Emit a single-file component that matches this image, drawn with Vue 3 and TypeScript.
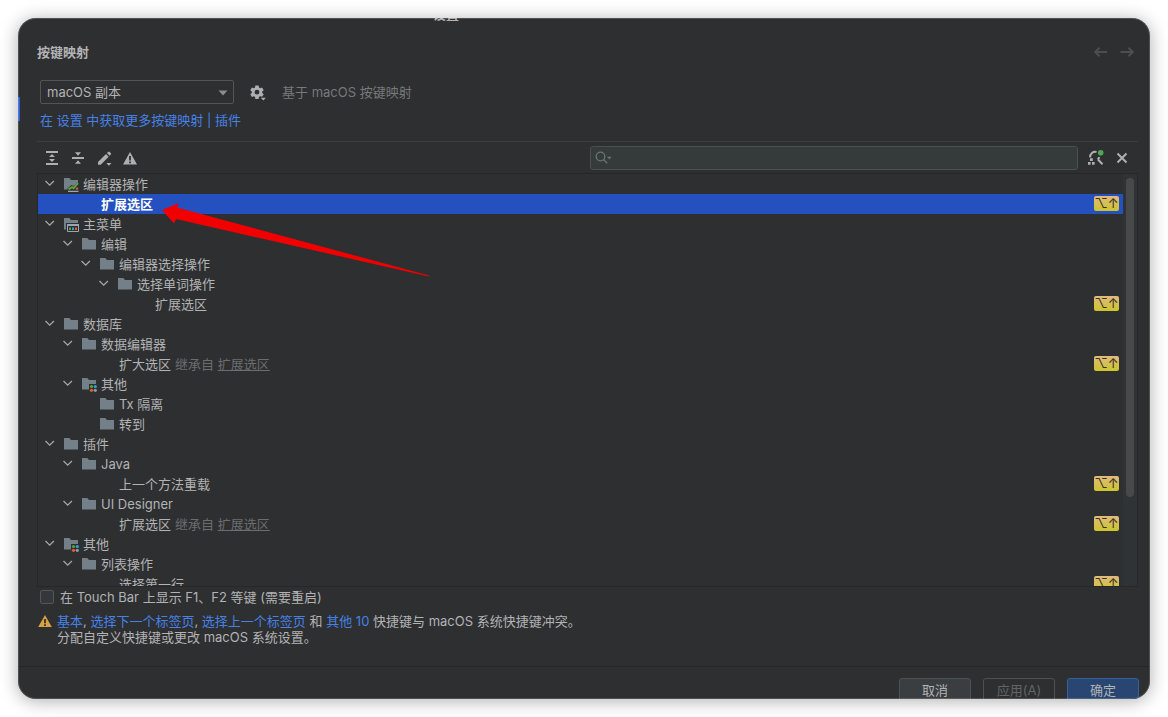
<script setup lang="ts">
import { ref } from 'vue'

type Icon = 'folder' | 'editor' | 'menu' | 'other'

interface Row {
  id: number
  depth: number
  label: string
  icon?: Icon
  open?: boolean
  inherited?: string
  shortcut?: string
}

const KEY = '⌥↑'

const rows: Row[] = [
  { id: 1, depth: 0, label: '编辑器操作', icon: 'editor', open: true },
  { id: 2, depth: 1, label: '扩展选区', shortcut: KEY },
  { id: 3, depth: 0, label: '主菜单', icon: 'menu', open: true },
  { id: 4, depth: 1, label: '编辑', icon: 'folder', open: true },
  { id: 5, depth: 2, label: '编辑器选择操作', icon: 'folder', open: true },
  { id: 6, depth: 3, label: '选择单词操作', icon: 'folder', open: true },
  { id: 7, depth: 4, label: '扩展选区', shortcut: KEY },
  { id: 8, depth: 0, label: '数据库', icon: 'folder', open: true },
  { id: 9, depth: 1, label: '数据编辑器', icon: 'folder', open: true },
  { id: 10, depth: 2, label: '扩大选区', inherited: '扩展选区', shortcut: KEY },
  { id: 11, depth: 1, label: '其他', icon: 'other', open: true },
  { id: 12, depth: 2, label: 'Tx 隔离', icon: 'folder' },
  { id: 13, depth: 2, label: '转到', icon: 'folder' },
  { id: 14, depth: 0, label: '插件', icon: 'folder', open: true },
  { id: 15, depth: 1, label: 'Java', icon: 'folder', open: true },
  { id: 16, depth: 2, label: '上一个方法重载', shortcut: KEY },
  { id: 17, depth: 1, label: 'UI Designer', icon: 'folder', open: true },
  { id: 18, depth: 2, label: '扩展选区', inherited: '扩展选区', shortcut: KEY },
  { id: 19, depth: 0, label: '其他', icon: 'other', open: true },
  { id: 20, depth: 1, label: '列表操作', icon: 'folder', open: true },
  { id: 21, depth: 2, label: '选择第一行', shortcut: KEY },
]

const selected = ref(2)
const keymap = ref('macOS 副本')
const query = ref('')
const touchBar = ref(false)
</script>

<template>
  <div class="page">
    <div class="window">
      <span class="marker"></span>
      <header class="titlebar"><span>设置</span></header>

      <main class="body">
        <div class="heading">
          <h1>按键映射</h1>
          <nav class="history">
            <button type="button" aria-label="后退" disabled>
              <svg width="16" height="16" viewBox="0 0 16 16"><path d="M14 8H2.500M6.500 3.800L2.300 8l4.200 4.200" /></svg>
            </button>
            <button type="button" aria-label="前进" disabled>
              <svg width="16" height="16" viewBox="0 0 16 16"><path d="M1.500 8h12M9.500 3.800L13.700 8l-4.200 4.200" /></svg>
            </button>
          </nav>
        </div>

        <div class="scheme">
          <span class="combo">
            <select v-model="keymap" aria-label="按键映射">
              <option>macOS 副本</option>
            </select>
            <svg class="caret" width="10" height="6" viewBox="0 0 10 6"><path d="M0.500 0.500h9L5 5.500z" /></svg>
          </span>
          <button type="button" class="gear" aria-label="方案操作">
            <svg width="18" height="18" viewBox="0 0 18 18">
              <path fill-rule="evenodd" d="M6.400 2.500h3.200l.4 2 1.200.7 1.900-.7 1.600 2.700-1.500 1.300v1.400l1.500 1.300-1.600 2.700-1.900-.7-1.200.7-.4 2H6.400l-.4-2-1.200-.7-1.900.7-1.600-2.700 1.500-1.300V8.500L1.300 7.200l1.600-2.700 1.900.7L6 4.500zM8 6.800a2.400 2.400 0 1 0 0 4.800 2.400 2.400 0 0 0 0-4.800z" />
              <path class="halo" d="M10.500 13.800H18V18h-5z" />
              <path d="M11.800 14.800h5l-2.500 2.700z" />
            </svg>
          </button>
          <span class="based">基于 macOS 按键映射</span>
        </div>

        <p class="more"><a href="#more">在 设置 中获取更多按键映射</a> <span>|</span> <a href="#plugins">插件</a></p>

        <div class="toolbar">
          <div class="tools">
            <button type="button" aria-label="全部展开">
              <svg width="16" height="16" viewBox="0 0 16 16"><path d="M2 1h12v2H2zM2 13h12v2H2zM8 3.900l3 3H5zM8 12.100l3-3H5z" /></svg>
            </button>
            <button type="button" aria-label="全部折叠">
              <svg width="16" height="16" viewBox="0 0 16 16"><path d="M2 7h12v2H2zM8 5.700l3-3.400H5zM8 10.300l3 3.400H5z" /></svg>
            </button>
            <button type="button" aria-label="编辑快捷键">
              <svg width="16" height="16" viewBox="0 0 16 16"><path d="M2 12L10 4l2.700 2.700-8 8H2zM10.900 3.100l1.200-1.200q.8-.7 1.500 0l1.200 1.200q.7.700 0 1.500l-1.200 1.200zM10.300 13H15.500l-2.600 2.800z" /></svg>
            </button>
            <button type="button" aria-label="显示冲突">
              <svg width="16" height="16" viewBox="0 0 16 16"><path fill-rule="evenodd" d="M8 2l7 12.500H1zM7.100 6v4.500h1.800V6zM7.100 11.500v1.700h1.800v-1.700z" /></svg>
            </button>
          </div>
          <label class="search">
            <svg width="18" height="14" viewBox="0 0 18 14">
              <circle cx="5.500" cy="5.500" r="4.300" /><path class="line" d="M8.700 8.700l3.500 3.500" /><path class="drop" d="M12 5.800h4.600l-2.300 2.600z" />
            </svg>
            <input v-model="query" type="text" aria-label="搜索操作" />
          </label>
          <button type="button" class="find" aria-label="按快捷键查找">
            <svg width="18" height="18" viewBox="0 0 18 18">
              <path class="ring" d="M3.200 8.300A5 5 0 0 1 9.500 3M12.200 8q-.3 1.500-1.500 2.500M11 10.500l4.500 4.800" />
              <path d="M1 13h2.600v2.800H1zM5 13h2.600v2.800H5zM3 9.300h2.800V12H3z" />
              <circle cx="13.700" cy="3.700" r="2.800" />
            </svg>
          </button>
          <button type="button" class="clear" aria-label="清除">
            <svg width="12" height="12" viewBox="0 0 12 12"><path d="M1.500 1.500l9 9M10.500 1.500l-9 9" /></svg>
          </button>
        </div>

        <div class="tree-box">
          <ul class="tree" role="tree">
            <li
              v-for="row in rows"
              :key="row.id"
              class="row"
              :class="{ selected: row.id === selected }"
              role="treeitem"
              :aria-selected="row.id === selected"
              :style="{ paddingLeft: 4 + row.depth * 18 + 'px' }"
              @click="selected = row.id"
            >
              <span class="slot">
                <button v-if="row.open" type="button" class="toggle" aria-label="折叠">
                  <svg width="16" height="16" viewBox="0 0 16 16"><path d="M3.500 5l4.200 4.200L11.900 5" /></svg>
                </button>
              </span>
              <span class="slot icon">
                <svg v-if="row.icon" width="16" height="16" viewBox="0 0 16 16">
                  <path class="folder" d="M1 2h5.300l1.700 2h7v9.500H1z" />
                  <template v-if="row.icon === 'other'">
                    <path class="cut" d="M8 8h8v8H8z" />
                    <circle cx="10.500" cy="10.500" r="1.600" fill="#57a639" />
                    <circle cx="14.300" cy="10.500" r="1.600" fill="#35a0d4" />
                    <circle cx="10.500" cy="14.300" r="1.600" fill="#ec5a29" />
                    <circle cx="14.300" cy="14.300" r="1.600" fill="#8d9ba5" />
                  </template>
                  <template v-if="row.icon === 'editor'">
                    <path class="cut" d="M16 5.500V16H4.500v-3.500l4-3.500 2 1z" />
                    <path d="M5.500 13.300L9 11.200l1.500 1 4.500-5" stroke="#57a639" stroke-width="2" fill="none" />
                    <path d="M12.700 11.500h2.500v2.200h-2.500z" fill="#c75450" />
                    <path d="M5 14.800h10.500V16H5z" fill="#9aa7b0" />
                  </template>
                  <template v-if="row.icon === 'menu'">
                    <path class="cut" d="M3 7h13v9H3z" />
                    <path d="M4.500 8.500h11v7h-11z" stroke="#9aa7b0" fill="none" />
                    <path d="M4 8h12v2H4z" fill="#9aa7b0" />
                    <path d="M6 11.500h2v2.500H6z" fill="#57a639" />
                    <path d="M9 11.500h2v2.500H9z" fill="#35a0d4" />
                    <path d="M12 11.500h2v2.500h-2z" fill="#ec5a29" />
                  </template>
                </svg>
              </span>
              <span class="label">{{ row.label }}</span>
              <span v-if="row.inherited" class="inherited">继承自 <a href="#inherited">{{ row.inherited }}</a></span>
              <kbd v-if="row.shortcut">{{ row.shortcut }}</kbd>
            </li>
          </ul>
          <div class="scrollbar"><span class="thumb"></span></div>
        </div>

        <label class="touch">
          <input v-model="touchBar" type="checkbox" />
          <span>在 Touch Bar 上显示 F1、F2 等键 (需要重启)</span>
        </label>

        <div class="conflict">
          <svg width="16" height="16" viewBox="0 0 16 16"><path fill="#d9a343" d="M8 2l6.800 12H1.200z" /><path fill="#2e2f31" d="M7.100 6h1.800v4.300H7.100zM7.100 11.200h1.800v1.700H7.100z" /></svg>
          <p>
            <a href="#basic">基本</a>, <a href="#next">选择下一个标签页</a>, <a href="#prev">选择上一个标签页</a> 和 <a href="#others">其他 10</a> 快捷键与 macOS 系统快捷键冲突。<br />
            分配自定义快捷键或更改 macOS 系统设置。
          </p>
        </div>
      </main>

      <footer class="footer">
        <button type="button">取消</button>
        <button type="button" disabled>应用(A)</button>
        <button type="button" class="primary">确定</button>
      </footer>
    </div>

    <svg class="arrow" width="272" height="78" viewBox="0 0 272 78">
      <path d="M2 10L19 3l-2 4.500L269 75.500v1L16 19l-2 4.500z" />
    </svg>
  </div>
</template>

<style>
body {
  margin: 0;
  background: #fff;
}
</style>

<style scoped>
.page {
  position: relative;
  box-sizing: border-box;
  height: 100vh;
  padding: 18px;
  font: 13px/16px Inter, "Noto Sans CJK SC", sans-serif;
  color: #b2b3b4;
}

.window {
  position: relative;
  display: flex;
  flex-direction: column;
  height: 100%;
  overflow: hidden;
  border-radius: 18px;
  background: #2e2f31;
  box-shadow: 0 2px 18px rgba(0, 0, 0, 0.32);
}

.window::after {
  content: "";
  position: absolute;
  inset: 0;
  border: 1px solid rgba(255, 255, 255, 0.16);
  border-radius: 18px;
  pointer-events: none;
}

.marker {
  position: absolute;
  left: 0;
  top: 79px;
  width: 2px;
  height: 24px;
  background: #2f5fd8;
}

.titlebar {
  display: flex;
  flex: none;
  align-items: flex-end;
  justify-content: center;
  height: 4px;
  margin-right: 276px;
  overflow: hidden;
  font-weight: 700;
}

button {
  display: flex;
  align-items: center;
  justify-content: center;
  margin: 0;
  padding: 0;
  border: 0;
  background: none;
  color: inherit;
  font: inherit;
}

svg {
  display: block;
  flex: none;
}

a {
  color: #4681e6;
  text-decoration: none;
}

p {
  margin: 0;
}

.body {
  display: flex;
  flex: 1;
  flex-direction: column;
  min-height: 0;
  padding: 18px 12px 21px 19px;
}

.heading {
  display: flex;
  align-items: center;
  justify-content: space-between;
  height: 24px;
}

h1 {
  margin: 0;
  font-size: 13px;
  font-weight: 700;
}

.history {
  display: flex;
  gap: 10px;
  padding-right: 3px;
}

.history path {
  fill: none;
  stroke: #4c4e50;
  stroke-width: 2;
}

.scheme {
  display: flex;
  align-items: center;
  margin: 16px 0 8px 3px;
}

.combo {
  position: relative;
  width: 194px;
}

.combo select {
  display: block;
  box-sizing: border-box;
  width: 100%;
  height: 24px;
  padding: 0 24px 0 6px;
  border: 1px solid #525456;
  border-radius: 2px;
  appearance: none;
  background: #2e2f31;
  color: inherit;
  font: inherit;
}

.caret {
  position: absolute;
  top: 10px;
  right: 6px;
  fill: #8a8c8e;
  pointer-events: none;
}

.gear {
  margin-left: 15px;
  fill: #adb0b3;
}

.halo {
  fill: #2e2f31;
}

.based {
  margin-left: 15px;
  color: #77797b;
}

.more {
  padding: 0 0 13px 3px;
  color: #4681e6;
}

.toolbar {
  display: flex;
  align-items: center;
  height: 31px;
  border-top: 1px solid #3d3e40;
}

.tools {
  display: flex;
  gap: 10px;
  flex: 1;
  padding-left: 7px;
  fill: #adb0b3;
}

.search {
  display: flex;
  align-items: center;
  flex: none;
  box-sizing: border-box;
  width: calc(50% - 62px);
  height: 24px;
  padding-left: 4px;
  border: 1px solid #4b4f51;
  border-radius: 3px;
  background: #353a3b;
}

.search circle,
.search .line {
  fill: none;
  stroke: #6c7276;
  stroke-width: 1.3;
}

.search .drop {
  fill: #6c7276;
}

.search input {
  flex: 1;
  min-width: 0;
  padding: 0 4px;
  border: 0;
  outline: 0;
  background: none;
  color: inherit;
  font: inherit;
}

.find {
  margin-left: 9px;
  fill: #adb0b3;
}

.find .ring {
  fill: none;
  stroke: #adb0b3;
  stroke-width: 2;
}

.find circle {
  fill: #4fa653;
}

.clear {
  margin: 0 10px 0 11px;
}

.clear path {
  stroke: #adb0b3;
  stroke-width: 2;
}

.tree-box {
  display: flex;
  flex: 1;
  min-height: 0;
  overflow: hidden;
  border: 1px solid #26272a;
}

.tree {
  flex: 1;
  margin: 0;
  padding: 0;
  list-style: none;
}

.row {
  display: flex;
  align-items: center;
  height: 20px;
  padding-right: 4px;
}

.row.selected {
  background: #2450c0;
  color: #fff;
}

.row.selected .label {
  font-weight: 700;
}

.slot {
  flex: none;
  width: 16px;
}

.icon {
  margin: 0 4px 0 5px;
}

.toggle path {
  fill: none;
  stroke: #a5a7a9;
  stroke-width: 1.3;
}

.folder {
  fill: #73808a;
}

.cut {
  fill: #2e2f31;
}

.inherited {
  margin-left: 4px;
  color: #6b6d6f;
}

.inherited a {
  color: inherit;
  text-decoration: underline;
}

kbd {
  width: 25px;
  height: 15px;
  margin: 0 0 1px auto;
  border-radius: 2px;
  background: linear-gradient(#e3b980, #cbc52c);
  color: #35321f;
  font: 13px/15px Inter, "DejaVu Sans", sans-serif;
  text-align: center;
  white-space: nowrap;
}

.scrollbar {
  width: 14px;
  flex: none;
  box-sizing: border-box;
  padding: 4px 3px;
  background: #303335;
}

.thumb {
  display: block;
  width: 8px;
  height: 79%;
  border-radius: 4px;
  background: #48494b;
}

.touch {
  display: flex;
  align-items: center;
  align-self: flex-start;
  gap: 6px;
  margin: 2px 0 8px 3px;
}

.touch input {
  width: 14px;
  height: 14px;
  margin: 0;
  box-sizing: border-box;
  border: 1px solid #545759;
  border-radius: 2px;
  appearance: none;
  background: #34383a;
}

.conflict {
  display: flex;
  gap: 4px;
}

.footer {
  display: flex;
  flex: none;
  align-items: flex-start;
  justify-content: flex-end;
  gap: 12px;
  height: 21px;
  padding: 11px 11px 0 0;
  overflow: hidden;
  border-top: 1px solid #252628;
}

.footer button {
  flex: none;
  width: 72px;
  height: 24px;
  border: 1px solid #4e5153;
  border-radius: 3px;
  background: #3b3e40;
}

.footer button:disabled {
  background: none;
  color: #626466;
}

.footer .primary {
  border-color: #35619b;
  background: #294672;
}

.arrow {
  position: absolute;
  left: 160px;
  top: 200px;
  fill: #f20000;
  pointer-events: none;
}
</style>
